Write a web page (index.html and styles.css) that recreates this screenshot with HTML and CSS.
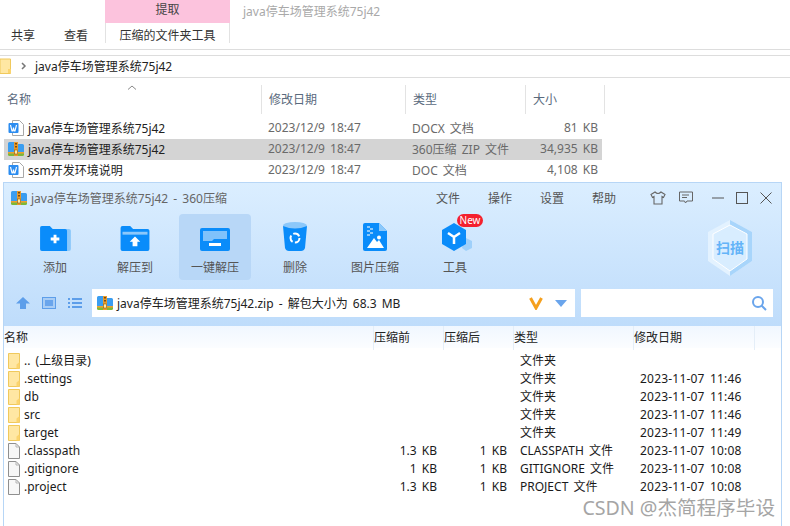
FILE: index.html
```html
<!DOCTYPE html>
<html lang="zh-CN">
<head>
<meta charset="utf-8">
<title>java停车场管理系统75j42</title>
<link rel="stylesheet" href="styles.css">
</head>
<body>
<svg class="defs" width="0" height="0" aria-hidden="true">
  <defs>
    <symbol id="zip" viewBox="0 0 16 16">
      <path d="M0 2.500Q0 1 1.500 1H6l1.500 2H14.500Q16 3 16 4.500V11H0Z" fill="#3a9df0"/>
      <path d="M0 11H16V13.500Q16 15 14.500 15H1.500Q0 15 0 13.500Z" fill="#7cb83a"/>
      <rect y="11" width="16" height="1.500" fill="#f0a030"/>
      <rect x="6" y="1" width="4" height="14" fill="#e89a2a"/>
      <rect x="7" y="2" width="2" height="1.500" fill="#7a4a10"/>
      <rect x="7" y="5" width="2" height="1.500" fill="#7a4a10"/>
      <rect x="6.500" y="9" width="3" height="4" fill="#ffe9a8" stroke="#8a5a10" stroke-width=".6"/>
    </symbol>
    <symbol id="word" viewBox="0 0 16 16">
      <path d="M4.500 .5H11.500L15.500 4.500V15.500H4.500Z" fill="#fff" stroke="#a8a8a8"/>
      <rect x=".5" y="3" width="10" height="10" rx="1" fill="#2b8cf0"/>
      <path d="M2.500 5L4 11H4.800L5.500 7.500L6.200 11H7L8.500 5" fill="none" stroke="#fff" stroke-width="1.100"/>
    </symbol>
    <symbol id="folder" viewBox="0 0 12 16">
      <path d="M.5 .5H11.500V15.500H.5Z" fill="#ffe7a3" stroke="#f0c95c"/>
      <path d="M8.500 15.500V11.500L11.500 9V15.500Z" fill="#fbd46e"/>
    </symbol>
    <symbol id="file" viewBox="0 0 12 16">
      <path d="M.5 .5H8L11.500 4V15.500H.5Z" fill="#f7f7f7" stroke="#8f8f8f"/>
      <path d="M8 .5V4H11.500" fill="none" stroke="#b5b5b5"/>
    </symbol>
  </defs>
</svg>

<div class="explorer">
  <div class="ribbon">
    <div class="tab">共享</div>
    <div class="tab tab-view">查看</div>
    <div class="context">
      <div class="context-head">提取</div>
      <div class="context-tab">压缩的文件夹工具</div>
    </div>
    <div class="ribbon-title">java停车场管理系统75j42</div>
  </div>
  <div class="crumbs">
    <svg class="crumb-folder" width="12" height="16" viewBox="0 0 12 16"><path d="M0 1H10.500V15.500H0Z" fill="#ffe7a3" stroke="#f0c95c"/><path d="M8 15V11H11V15Z" fill="#fbd46e"/></svg>
    <svg class="crumb-arrow" width="6" height="8" viewBox="0 0 6 8"><path d="M1 1L4 4L1 7" fill="none" stroke="#777" stroke-width="1.500"/></svg>
    <span>java停车场管理系统75j42</span>
  </div>
  <div class="ex-head">
    <svg class="sort" width="10" height="5" viewBox="0 0 10 5"><path d="M1 4.500L5 1L9 4.500" fill="none" stroke="#888"/></svg>
    <div class="ex-h ex-name">名称</div>
    <div class="ex-h">修改日期</div>
    <div class="ex-h">类型</div>
    <div class="ex-h">大小</div>
  </div>
  <div class="ex-row">
    <svg class="ex-icon" width="16" height="16"><use href="#word"/></svg>
    <span class="ex-file">java停车场管理系统75j42</span><span>2023/12/9 18:47</span><span>DOCX 文档</span><span class="ex-size">81 KB</span>
  </div>
  <div class="ex-row ex-selected">
    <svg class="ex-icon" width="16" height="16"><use href="#zip"/></svg>
    <span class="ex-file">java停车场管理系统75j42</span><span>2023/12/9 18:47</span><span>360压缩 ZIP 文件</span><span class="ex-size">34,935 KB</span>
  </div>
  <div class="ex-row">
    <svg class="ex-icon" width="16" height="16"><use href="#word"/></svg>
    <span class="ex-file">ssm开发环境说明</span><span>2023/12/9 18:47</span><span>DOC 文档</span><span class="ex-size">4,108 KB</span>
  </div>
</div>

<div class="zipwin">
  <div class="titlebar">
    <svg class="title-icon" width="16" height="16"><use href="#zip"/></svg>
    <div class="win-title">java停车场管理系统75j42 - 360压缩</div>
    <nav class="menu"><span>文件</span><span>操作</span><span>设置</span><span>帮助</span></nav>
    <div class="winctl">
      <svg width="16" height="14" viewBox="0 0 16 14"><path d="M5 1L1 3.500L2.500 6.500L4 5.500V13H12V5.500L13.500 6.500L15 3.500L11 1Q8 4 5 1Z" fill="none" stroke="#666" stroke-width="1.100"/></svg>
      <svg width="14" height="13" viewBox="0 0 14 13"><path d="M.5 1H13.500V10H8L6.500 12L5.500 10H.5Z M3 4H10 M3 6.500H8" fill="none" stroke="#666"/></svg>
      <svg class="ctl-min" width="12" height="12" viewBox="0 0 12 12"><path d="M0 6H12" stroke="#555"/></svg>
      <svg width="12" height="12" viewBox="0 0 12 12"><rect x=".5" y=".5" width="11" height="11" fill="none" stroke="#555"/></svg>
      <svg width="12" height="12" viewBox="0 0 12 12"><path d="M.5 .5L11.500 11.500M11.500 .5L.5 11.500" stroke="#555"/></svg>
    </div>
  </div>

  <div class="toolbar">
    <div class="tool">
      <svg width="31" height="25" viewBox="0 0 32 26"><path d="M0 2Q0 0 2 0H10L13 3H30Q32 3 32 5V24Q32 26 30 26H2Q0 26 0 24Z" fill="#8cc8fa"/><path d="M0 2Q0 0 2 0H10L13 3H26Q28 3 28 5V26H2Q0 26 0 24Z" fill="#0a8cfa"/><path d="M14 9V12H11V15H14V18H17V15H20V12H17V9Z" fill="#fff"/></svg>
      <span>添加</span>
    </div>
    <div class="tool">
      <svg width="30" height="25" viewBox="0 0 30 26"><path d="M0 2Q0 0 2 0H10L13 3H28Q30 3 30 5V24Q30 26 28 26H2Q0 26 0 24Z" fill="#0a8cfa"/><path d="M2 6H28V9H2Z" fill="#8cc8fa"/><path d="M15 11L20.500 16.500H17.500V21H12.500V16.500H9.500Z" fill="#fff"/></svg>
      <span>解压到</span>
    </div>
    <div class="tool tool-active">
      <svg width="30" height="23" viewBox="0 0 30 23"><path d="M0 2Q0 0 2 0H28Q30 0 30 2V21Q30 23 28 23H2Q0 23 0 21Z" fill="#0a8cfa"/><path d="M3 3H27V11H14L12 13H3Z" fill="#7fc2fb"/><rect x="9" y="15" width="12" height="3" fill="#fff"/></svg>
      <span>一键解压</span>
    </div>
    <div class="tool">
      <svg width="24" height="29" viewBox="0 0 24 29"><ellipse cx="12" cy="3.500" rx="12" ry="3.500" fill="#8cc8fa"/><path d="M0 4Q12 9 24 4L22 26Q21 29 18 29H6Q3 29 2 26Z" fill="#0a8cfa"/><circle cx="12" cy="16" r="4.500" fill="none" stroke="#fff" stroke-width="2" stroke-dasharray="7 2.420"/></svg>
      <span>删除</span>
    </div>
    <div class="tool">
      <svg width="24" height="28" viewBox="0 0 24 28"><path d="M2 0H16L24 8V26Q24 28 22 28H2Q0 28 0 26V2Q0 0 2 0Z" fill="#0a8cfa"/><path d="M16 0L24 8H16Z" fill="#8cc8fa"/><path d="M4 3H7V5H4ZM7 5H10V7H7ZM4 7H7V9H4ZM7 9H10V11H7ZM4 11H7V13H4Z" fill="#8cc8fa"/><path d="M4 25L11 15L14 19L16 17L21 25Z" fill="#fff"/><circle cx="16" cy="14.500" r="2" fill="#fff"/></svg>
      <span>图片压缩</span>
    </div>
    <div class="tool">
      <svg class="tool-hex" width="30" height="28" viewBox="0 0 30 28"><path d="M22 14L30 18V25L24 28L20 25Z" fill="#9fd0fa"/><path d="M12 0L24 7V21L12 28L0 21V7Z" fill="#0a8cfa"/><path d="M12 14V21M12 14L6 10M12 14L18 10" stroke="#fff" stroke-width="2.500" fill="none"/></svg>
      <span>工具</span>
      <b class="badge">New</b>
    </div>
    <div class="scan">
      <svg width="46" height="58" viewBox="0 0 46 58"><path d="M23 1L45 13V42L23 57L1 42V13Z" fill="#e3f2ff"/><path d="M23 1L45 13V42L23 57Z" fill="#a8d5fb"/><path d="M23 6L40 15V40L23 52L6 40V15Z" fill="#d8edff" stroke="#fff"/></svg>
      <span>扫描</span>
    </div>
  </div>

  <div class="addrrow">
    <svg class="nav-up" width="14" height="12" viewBox="0 0 14 12"><path d="M7 0L14 6.500H10V12H4V6.500H0Z" fill="#5d9eea"/></svg>
    <svg class="nav-view" width="14" height="12" viewBox="0 0 14 12"><rect x=".5" y=".5" width="13" height="11" fill="#a9cdf5" stroke="#5d9eea"/><rect x="3" y="3" width="8" height="6" fill="#6aa5ec"/></svg>
    <svg class="nav-list" width="14" height="10" viewBox="0 0 14 10"><path d="M0 1H2M4 1H14M0 5H2M4 5H14M0 9H2M4 9H14" stroke="#5d9eea" stroke-width="1.800"/></svg>
    <div class="addrbox">
      <svg width="16" height="16"><use href="#zip"/></svg>
      <span class="addr-text">java停车场管理系统75j42.zip - 解包大小为 68.3 MB</span>
      <svg class="addr-v" width="14" height="13" viewBox="0 0 14 13"><path d="M1.500 1L7 11L12.500 1" fill="none" stroke="#f5a01e" stroke-width="3"/></svg>
      <svg class="addr-drop" width="12" height="7" viewBox="0 0 12 7"><path d="M0 0H12L6 7Z" fill="#6aa5ec"/></svg>
    </div>
    <div class="searchbox">
      <svg width="16" height="16" viewBox="0 0 16 16"><circle cx="7" cy="7" r="5" fill="none" stroke="#6aa5ec" stroke-width="2"/><path d="M10.500 10.500L15 15" stroke="#6aa5ec" stroke-width="2"/></svg>
    </div>
  </div>

  <div class="list">
    <div class="list-head">
      <div class="lh lh-name">名称</div>
      <div class="lh">压缩前</div>
      <div class="lh">压缩后</div>
      <div class="lh">类型</div>
      <div class="lh">修改日期</div>
      <div class="lh"></div>
    </div>
    <div class="rows">
      <div class="row"><svg width="12" height="16"><use href="#folder"/></svg><span class="n">.. (上级目录)</span><span class="r"></span><span class="r"></span><span class="t">文件夹</span><span class="d"></span></div>
      <div class="row"><svg width="12" height="16"><use href="#folder"/></svg><span class="n">.settings</span><span class="r"></span><span class="r"></span><span class="t">文件夹</span><span class="d">2023-11-07 11:46</span></div>
      <div class="row"><svg width="12" height="16"><use href="#folder"/></svg><span class="n">db</span><span class="r"></span><span class="r"></span><span class="t">文件夹</span><span class="d">2023-11-07 11:46</span></div>
      <div class="row"><svg width="12" height="16"><use href="#folder"/></svg><span class="n">src</span><span class="r"></span><span class="r"></span><span class="t">文件夹</span><span class="d">2023-11-07 11:46</span></div>
      <div class="row"><svg width="12" height="16"><use href="#folder"/></svg><span class="n">target</span><span class="r"></span><span class="r"></span><span class="t">文件夹</span><span class="d">2023-11-07 11:49</span></div>
      <div class="row"><svg width="12" height="16"><use href="#file"/></svg><span class="n">.classpath</span><span class="r">1.3 KB</span><span class="r">1 KB</span><span class="t">CLASSPATH 文件</span><span class="d">2023-11-07 10:08</span></div>
      <div class="row"><svg width="12" height="16"><use href="#file"/></svg><span class="n">.gitignore</span><span class="r">1 KB</span><span class="r">1 KB</span><span class="t">GITIGNORE 文件</span><span class="d">2023-11-07 10:08</span></div>
      <div class="row"><svg width="12" height="16"><use href="#file"/></svg><span class="n">.project</span><span class="r">1.3 KB</span><span class="r">1 KB</span><span class="t">PROJECT 文件</span><span class="d">2023-11-07 10:08</span></div>
    </div>
  </div>
</div>

<div class="watermark">CSDN @杰简程序毕设</div>
</body>
</html>
```

FILE: styles.css
```css
* { box-sizing: border-box; }
html, body { margin: 0; padding: 0; }
body {
  position: relative;
  width: 790px;
  height: 526px;
  overflow: hidden;
  background: #fff;
  font-family: "Noto Sans", "Noto Sans CJK SC", sans-serif;
  font-size: 12px;
  word-spacing: 2px;
  color: #1a1a1a;
}
.defs { position: absolute; }
svg { display: block; flex: none; }

/* Explorer behind */
.explorer { height: 182px; }
.ribbon { display: flex; height: 43px; }
.tab { width: 53px; padding: 27px 0 0 11px; line-height: 17px; color: #333; }
.tab-view { width: 52px; }
.context { width: 125px; }
.context-head {
  height: 23px;
  background: #fcc3dd;
  text-align: center;
  line-height: 19px;
  color: #444;
}
.context-tab {
  height: 20px;
  border: 1px solid #e2e2e2;
  border-width: 0 1px;
  background: #fff;
  text-align: center;
  line-height: 25px;
  color: #333;
}
.ribbon-title { margin-left: 13px; line-height: 24px; color: #a9a9a9; }
.crumbs {
  display: flex;
  align-items: center;
  height: 29px;
  margin-top: 6px;
  padding: 6px 0 2px;
  border-top: 1px solid #ddd;
  border-bottom: 1px solid #ddd;
  position: relative;
  color: #222;
}
.crumbs::before {
  content: "";
  position: absolute;
  left: 0; right: 0; top: 5px;
  border-top: 1px solid #ddd;
}
.crumb-arrow { margin: 0 8px 0 9px; }
.ex-head {
  position: relative;
  display: grid;
  grid-template-columns: 261px 144px 120px 80px;
  height: 27px;
  margin-top: 7px;
  margin-bottom: 6px;
}
.ex-h {
  padding-left: 7px;
  line-height: 29px;
  color: #5a6a7d;
  border-left: 1px solid #e3e3e3;
}
.ex-name { border-left: 0; }
.ex-h:last-child { border-right: 1px solid #e3e3e3; }
.sort { position: absolute; left: 127px; top: 0; }
.ex-row {
  display: grid;
  grid-template-columns: 24px 240px 144px 120px 70px;
  align-items: center;
  width: 598px;
  height: 21px;
  padding-bottom: 2px;
  margin-left: 4px;
  color: #6a6a6a;
}
.ex-icon { margin-left: 4px; }
.ex-file { color: #222; }
.ex-size { text-align: right; padding-right: 4px; }
.ex-selected { background: #d4d4d4; }

/* 360 window */
.zipwin {
  height: 344px;
  margin: 0 8px 0 3px;
  border: 1px solid #b7d6f6;
  border-bottom: 0;
  background: linear-gradient(#dbeeff, #bedcfb 145px);
  display: flex;
  flex-direction: column;
  color: #555;
}
.titlebar { display: flex; align-items: center; height: 31px; padding: 0 9px 2px 7px; white-space: nowrap; }
.win-title { margin-left: 4px; color: #666; }
.menu { display: flex; gap: 28px; margin-left: auto; }
.winctl { display: flex; align-items: center; margin-left: 34px; gap: 13px; }
.ctl-min { margin-left: 6px; }
.winctl svg:nth-child(n+4) { margin-left: -1px; }
.toolbar { position: relative; display: flex; gap: 8px; height: 66px; padding-left: 15px; }
.tool {
  position: relative;
  width: 72px;
  height: 66px;
  border-radius: 4px;
  display: flex;
  flex-direction: column;
  align-items: center;
  justify-content: flex-end;
  padding-bottom: 4px;
  gap: 9px;
}
.tool span { line-height: 16px; }
.tool-active { background: #b8d7f7; }
.badge {
  position: absolute;
  left: 38px; top: 0;
  width: 26px; height: 13px;
  border-radius: 7px;
  background: #f4202e;
  color: #fff;
  font-size: 10px;
  font-weight: 400;
  line-height: 13px;
  text-align: center;
}
.tool-hex { margin-left: 4px; }
.scan {
  position: absolute;
  left: 703px; top: 5px;
  width: 46px; height: 58px;
}
.scan span {
  position: absolute;
  left: 0; right: 0; top: 18px;
  text-align: center;
  font-size: 14px;
  font-weight: 700;
  color: #63b4f8;
}
.addrrow { display: flex; align-items: center; height: 28px; margin-top: 9px; padding-left: 12px; }
.nav-view { margin-left: 12px; }
.nav-list { margin-left: 12px; }
.addrbox {
  display: flex;
  align-items: center;
  width: 483px;
  height: 28px;
  margin-left: 10px;
  padding-left: 5px;
  background: #fff;
  color: #222;
}
.addr-text { flex: 1; margin-left: 4px; }
.addr-v { margin-right: 12px; }
.addr-drop { margin-right: 8px; }
.searchbox {
  display: flex;
  align-items: center;
  justify-content: flex-end;
  width: 192px;
  height: 28px;
  margin-left: 6px;
  padding-right: 6px;
  background: #fff;
}
.list { flex: 1; margin-top: 9px; background: #fff; }
.list-head {
  display: grid;
  grid-template-columns: 369px 70px 70px 120px 121px 1fr;
  height: 22px;
  background: linear-gradient(#f0f7ff, #fbfdff);
  color: #222;
}
.lh { line-height: 24px; border-left: 1px solid #e4eef8; }
.lh-name { border-left: 0; }
.rows { padding: 4px 0 0 4px; color: #1a1a1a; }
.row {
  display: grid;
  grid-template-columns: 16px 345px 68px 70px 120px 1fr;
  align-items: center;
  height: 18px;
  line-height: 18px;
}
.r { text-align: right; }
.t { padding-left: 13px; }
.d { padding-left: 13px; letter-spacing: .2px; }

.watermark {
  position: absolute;
  right: 15px;
  top: 496px;
  font-size: 19.6px;
  line-height: 23px;
  word-spacing: 0;
  color: #a5a5a5;
  text-shadow: 0 0 1px #fff;
}
```
